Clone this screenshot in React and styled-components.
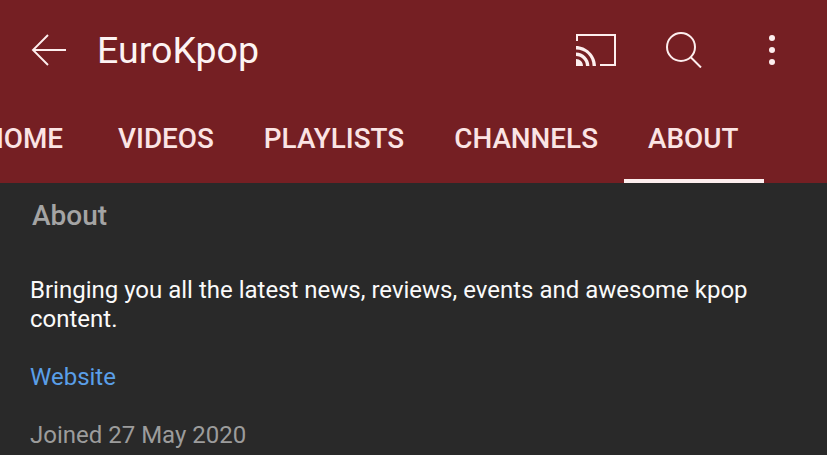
import React from "react";
import styled, { createGlobalStyle } from "styled-components";

const Global = createGlobalStyle`
  html, body { margin: 0; padding: 0; background: #292929; }
  body { font-family: Roboto, "Liberation Sans", sans-serif; }
`;

const Page = styled.div`
  width: 827px;
  height: 455px;
  overflow: hidden;
  background: #292929;
`;

const Header = styled.header`
  background: #751f23;
  height: 183px;
  display: flex;
  flex-direction: column;
`;

const TopBar = styled.div`
  height: 100px;
  display: flex;
  align-items: center;
  padding: 0 51px 0 31px;
`;

const Title = styled.h1`
  margin: 0 0 0 30px;
  font-size: 37.5px;
  font-weight: 400;
  color: #fdf3f3;
  flex: 1;
`;

const IconButton = styled.div`
  display: flex;
  margin-left: ${(p) => p.$gap || 0}px;
`;

const Tabs = styled.nav`
  display: flex;
  height: 83px;
  margin-left: -41px;
`;

const Tab = styled.div`
  box-sizing: border-box;
  padding: 22px ${(p) => (p.$active ? 26 : 25)}px 0 ${(p) => (p.$active ? 24 : 25)}px;
  margin-left: ${(p) => (p.$active ? 1 : 0)}px;
  margin-right: ${(p) => p.$after || 0}px;
  font-size: 27.85px;
  line-height: 33px;
  font-weight: 500;
  color: #fbe4e4;
  border-bottom: 4px solid ${(p) => (p.$active ? "#fdeeee" : "transparent")};
`;

const Content = styled.main`
  padding: 17px 30px 0;
`;

const Heading = styled.h2`
  margin: 0 0 0 2px;
  font-size: 28px;
  font-weight: 500;
  line-height: 32px;
  color: #a4a4a4;
`;

const Description = styled.p`
  margin: 44px 0 0;
  font-size: 24px;
  line-height: 29px;
  color: #fafafa;
  max-width: 760px;
`;

const Link = styled.a`
  display: block;
  margin-top: 29px;
  font-size: 24px;
  line-height: 29px;
  color: #5a9fe8;
`;

const Joined = styled.p`
  margin: 29px 0 0;
  font-size: 24px;
  line-height: 29px;
  color: #9c9c9c;
`;

export default function App() {
  return (
    <Page>
      <Global />
      <Header>
        <TopBar>
          <svg width="36" height="32" viewBox="0 0 36 32" fill="none" stroke="#fdeeee" strokeWidth="1.9">
            <path d="M35 16H2M17 1L2 16l15 15" />
          </svg>
          <Title>EuroKpop</Title>
          <IconButton>
            <svg width="40" height="32" viewBox="0 0 40 32" fill="none" stroke="#fdeeee" strokeWidth="2">
              <path d="M1 7V1h38v30H24" />
              <path d="M0 12c10 0 20 9 20 20h-3.4C16.600 22 9 15.400 0 15.400zM0 18.600c7 0 13.400 6 13.400 13.400H10C10 26.500 5.500 22 0 22zM0 25c4 0 7 3 7 7H0z" fill="#fdeeee" stroke="none" />
            </svg>
          </IconButton>
          <IconButton $gap={50}>
            <svg width="36" height="36" viewBox="0 0 36 36" fill="none" stroke="#fdeeee" strokeWidth="2">
              <circle cx="15" cy="15" r="14" />
              <path d="M24.500 25l10.500 10.500" />
            </svg>
          </IconButton>
          <IconButton $gap={66}>
            <svg width="8" height="32" viewBox="0 0 8 32" fill="#fdeeee">
              <circle cx="4" cy="4" r="3" />
              <circle cx="4" cy="16" r="3" />
              <circle cx="4" cy="28" r="3" />
            </svg>
          </IconButton>
        </TopBar>
        <Tabs>
          <Tab $after={5}>HOME</Tab>
          <Tab>VIDEOS</Tab>
          <Tab>PLAYLISTS</Tab>
          <Tab>CHANNELS</Tab>
          <Tab $active>ABOUT</Tab>
        </Tabs>
      </Header>
      <Content>
        <Heading>About</Heading>
        <Description>
          Bringing you all the latest news, reviews, events and awesome kpop content.
        </Description>
        <Link>Website</Link>
        <Joined>Joined 27 May 2020</Joined>
      </Content>
    </Page>
  );
}
